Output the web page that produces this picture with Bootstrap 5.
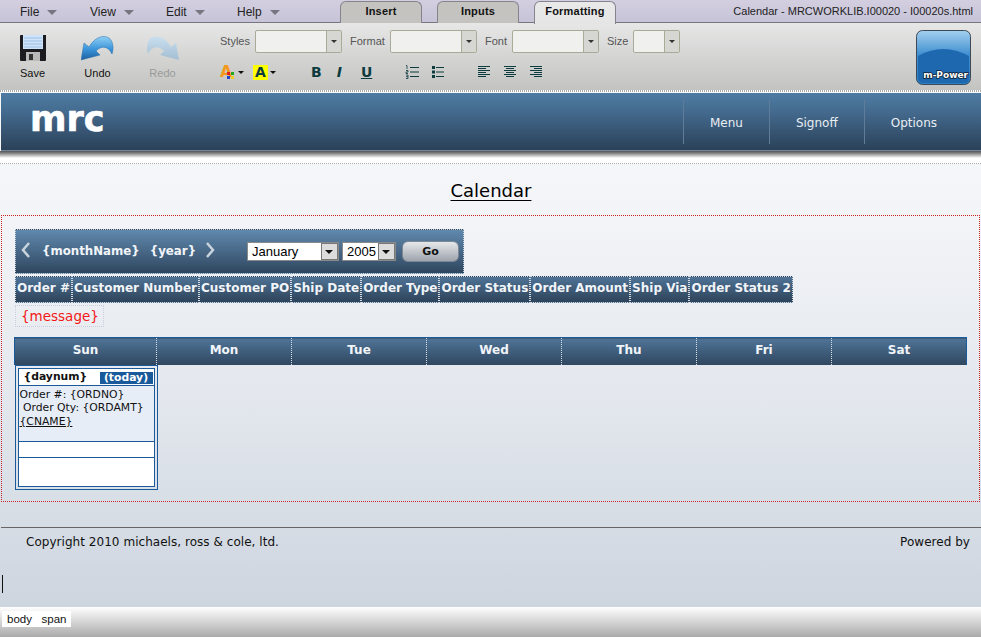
<!DOCTYPE html>
<html lang="en">
<head>
    <meta charset="UTF-8">
    <meta name="viewport" content="width=device-width, initial-scale=1.0">
    <title>Calendar - m-Power designer</title>
    <link href="https://cdn.jsdelivr.net/npm/bootstrap@5.3.0/dist/css/bootstrap.min.css" rel="stylesheet">
    <style>
        html, body { height: 100%; overflow: hidden; }
        body {
            background: #fff;
            color: #111;
            font-family: "Liberation Sans", Arial, sans-serif;
            font-size: 12px;
        }
        .app-shell { height: 637px; }

        /* top menu + tabs */
        .menu-strip {
            height: 23px;
            background: linear-gradient(#d3cfe0, #c8c4d8);
            border-bottom: 1px solid #77757f;
        }
        .menu-item { position: absolute; top: 3px; font-size: 12px; color: #222; }
        .menu-file { left: 20px; }
        .menu-view { left: 90px; }
        .menu-edit { left: 166px; }
        .menu-help { left: 237px; }
        .menu-caret {
            display: inline-block;
            margin-left: 8px;
            border-left: 5px solid transparent;
            border-right: 5px solid transparent;
            border-top: 5px solid #77757f;
            vertical-align: 1px;
        }
        .tab-link {
            width: 82px;
            height: 22px;
            border: 1px solid #85838c;
            border-bottom: 0;
            border-radius: 6px 6px 0 0;
            background: #c5c3c0;
            font-size: 11px;
            font-weight: bold;
            line-height: 19px;
            text-align: center;
            letter-spacing: .2px;
        }
        .tab-link.is-on { background: linear-gradient(#e9e9ea, #e4e5e4); height: 23px; margin-bottom: -1px; }
        .tab-row { padding-left: 340px; gap: 15px; padding-top: 1px; }
        .doc-title { font-size: 11px; padding-right: 8px; padding-top: 3px; color: #222; }

        /* toolbar */
        .tool-strip {
            height: 67px;
            background: linear-gradient(#e6e7e6, #c3c4c1);
        }
        .big-tool { width: 65px; text-align: center; font-size: 11px; padding-top: 11px; color: #111; }
        .big-tool svg { display: block; margin: 0 auto 3px; height: 28px; }
        .big-tool.is-off { color: #999; }
        .tool-rows { padding-left: 25px; }
        .combo-row { height: 23px; margin-top: 7px; color: #555; }
        .combo-label { font-size: 11px; flex: none; }
        .label-styles { width: 35px; }
        .label-format { width: 40px; }
        .label-font { width: 27px; }
        .label-size { width: 26px; }
        .combo-box {
            display: flex;
            height: 23px;
            margin-right: 8px;
            border: 1px solid #a9aa97;
            border-radius: 2px;
            background: #f0f1ef;
        }
        .combo-box span { flex: 1; }
        .combo-box b {
            width: 15px;
            border-left: 1px solid #a9aa97;
            background: #d6d7d3;
            position: relative;
        }
        .combo-box b::after {
            content: "";
            position: absolute;
            left: 4px;
            top: 9px;
            border-left: 3px solid transparent;
            border-right: 3px solid transparent;
            border-top: 3px solid #333;
        }
        .combo-87 { width: 87px; }
        .combo-47 { width: 47px; margin-right: 0; }
        .format-row { height: 18px; margin-top: 10px; color: #0d3b3f; }
        .fmt-glyph { font-family: "DejaVu Sans", sans-serif; font-weight: bold; font-size: 14px; line-height: 18px; }
        .mini-caret {
            display: inline-block;
            border-left: 3px solid transparent;
            border-right: 3px solid transparent;
            border-top: 3px solid #111;
            margin-left: 2px;
            vertical-align: 3px;
        }
        .swatch-a { color: #f39a1d; width: 16px; font-size: 16px; }
        .swatch-dots { margin: 6px 0 0 -9px; }
        .caret-a { margin-left: 4px; }
        .swatch-hi { background: #ffff00; color: #0d3b3f; width: 15px; height: 15px; line-height: 15px; text-align: center; display: inline-block; margin-left: 9px; }
        .glyph-b { margin-left: 35px; }
        .glyph-i { margin-left: 15px; font-style: italic; }
        .glyph-u { margin-left: 19px; text-decoration: underline; }
        .icon-ol { margin-left: 33px; }
        .icon-ul { margin-left: 13px; }
        .icon-first-align { margin-left: 34px; }
        .icon-align { margin-left: 14px; }
        .logo-slot { padding: 7px 10px 0 0; }

        .dot-strip {
            height: 2px;
            background: repeating-linear-gradient(90deg, #aaa 0 1px, #fff 1px 2px);
        }

        /* page preview */
        .page-area {
            flex: 1;
            min-height: 0;
            font-family: "DejaVu Sans", Verdana, sans-serif;
            background: linear-gradient(#f7f8fa 0, #f2f4f7 130px, #e4e8ee 300px, #cdd5df 100%);
        }
        .site-head {
            height: 58px;
            margin: 1px 0 0 1px;
            background: linear-gradient(#4f7ba3 0, #466e93 15px, #2b4159 100%);
            border-bottom: 1px solid #71869c;
        }
        .site-logo {
            font-weight: bold;
            font-size: 35px;
            line-height: 36px;
            color: #fff;
            padding: 8px 0 0 29px;
            -webkit-text-stroke: .6px #fff;
        }
        .site-link {
            height: 44px;
            margin-top: 7px;
            padding: 0 26px;
            line-height: 46px;
            color: #e9eef3;
            font-size: 12px;
            border-left: 1px solid #5f7c98;
        }
        .site-nav { padding-right: 18px; }
        .head-shadow { height: 7px; background: linear-gradient(#555, #777 25%, #fff); }
        .head-gap { height: 6px; background: #fff; border-bottom: 1px dotted #aaa; }
        .title-band {
            height: 51px;
            text-align: center;
            font-size: 18px;
            line-height: 54px;
            color: #000;
            padding-left: 1px;
        }
        .title-band u { text-underline-offset: 3px; }
        .design-box {
            height: 287px;
            border: 1px dotted #c22;
            margin: 0 1px 0 1px;
            padding: 13px 12px 0 12px;
        }
        .month-bar {
            width: 449px;
            height: 45px;
            margin-left: 1px;
            background: linear-gradient(#6089ae, #2f465f);
            border: 1px dotted #c9d0d8;
            color: #f1f5f9;
            font-weight: bold;
            font-size: 11.8px;
        }
        .month-arrow { width: 12px; flex: none; margin-bottom: 4px; }
        .arrow-prev { margin-left: 4px; }
        .arrow-next { margin-left: 8px; }
        .month-name { margin-left: 10px; }
        .month-year { margin-left: 10px; }
        .old-select {
            display: flex;
            align-items: center;
            height: 19px;
            background: #fff;
            border: 1px solid #8a8a8a;
            font-weight: normal;
            font-size: 13px;
            color: #000;
            font-family: "Liberation Sans", Arial, sans-serif;
            padding-left: 4px;
        }
        .old-select span { flex: 1; }
        .old-select b {
            width: 17px;
            height: 17px;
            background: #dcdcdc;
            border: 1px solid #777;
            position: relative;
        }
        .old-select b::after {
            content: "";
            position: absolute;
            left: 3px;
            top: 6px;
            border-left: 4px solid transparent;
            border-right: 4px solid transparent;
            border-top: 4px solid #111;
        }
        .select-month { width: 92px; margin-left: 31px; }
        .select-year { width: 54px; margin-left: 3px; }
        .go-btn {
            width: 57px;
            height: 21px;
            margin-left: 6px;
            border: 1px solid #7e8794;
            border-radius: 6px;
            background: linear-gradient(#e6e8ea, #9ea4ad);
            color: #111;
            font-size: 11px;
            font-weight: bold;
            line-height: 19px;
            text-align: center;
        }
        .field-row { margin: 2px 0 0 1px; }
        .field-cell {
            height: 27px;
            padding: 0 1px;
            line-height: 23px;
            background: linear-gradient(#4f7396, #2e4359);
            border: 1px dotted #d5dbe2;
            color: #f1f5f9;
            font-weight: bold;
            font-size: 12px;
            white-space: nowrap;
        }
        .msg-box {
            display: inline-block;
            margin: 2px 0 0 1px;
            padding: 0 4px 0 5px;
            height: 22px;
            line-height: 21px;
            border: 1px dotted #ccd;
            color: #f41818;
            font-size: 13.5px;
        }
        .cal-grid { width: 953px; margin-top: 10px; table-layout: fixed; border-collapse: collapse; }
        .cal-grid th {
            height: 27px;
            background: linear-gradient(#4f7498, #2f465e);
            border-top: 1px solid #1a5a9a;
            border-left: 1px dotted #d9e0e8;
            color: #f1f5f9;
            font-size: 12px;
            text-align: center;
            padding: 0 0 2px;
        }
        .cal-grid th:first-child { border-left: 1px solid #1a5a9a; width: 142px; }
        .cal-grid th:last-child { border-right: 1px solid #1a5a9a; }
        .cal-grid td { padding: 0; }
        .day-outer {
            width: 143px;
            height: 125px;
            padding: 2px;
            border: 1px solid #1a5a9a;
        }
        .day-inner { height: 100%; border: 1px solid #1a5a9a; background: #fff; color: #111; font-size: 10.8px; }
        .day-top { height: 17px; border-bottom: 1px solid #1a5a9a; font-weight: bold; padding: 0 1px 0 5px; line-height: 16px; }
        .today-chip { width: 53px; height: 12px; margin-top: 3px; background: #1a5a9a; color: #fff; line-height: 12px; text-align: center; }
        .day-body { height: 56px; background: #e6edf7; padding: 2px 1px; line-height: 13.5px; border-bottom: 1px solid #1a5a9a; white-space: nowrap; }
        .day-body a { color: #111; }
        .day-mid { height: 16px; border-bottom: 1px solid #1a5a9a; }
        .foot-line { margin-top: 25px; border-top: 1px solid #666; margin-left: 1px; padding: 5px 11px 0 25px; color: #111; font-size: 12px; letter-spacing: .04px; }
        .caret-line { position: absolute; left: 2px; top: 575px; width: 1px; height: 18px; background: #111; }
        .status-strip { height: 30px; background: linear-gradient(#fff, #aaa); padding: 4px 0 0 2px; }
        .path-chip { background: #fff; height: 16px; padding: 0 5px; font-size: 11.5px; line-height: 16px; }
    </style>
</head>
<body>
<div class="app-shell d-flex flex-column position-relative">

    <div class="menu-strip d-flex justify-content-between position-relative">
        <span class="menu-item menu-file">File<i class="menu-caret"></i></span>
        <span class="menu-item menu-view">View<i class="menu-caret"></i></span>
        <span class="menu-item menu-edit">Edit<i class="menu-caret"></i></span>
        <span class="menu-item menu-help">Help<i class="menu-caret"></i></span>
        <div class="tab-row d-flex">
            <div class="tab-link">Insert</div>
            <div class="tab-link">Inputs</div>
            <div class="tab-link is-on">Formatting</div>
        </div>
        <div class="doc-title">Calendar - MRCWORKLIB.I00020 - I00020s.html</div>
    </div>

    <div class="tool-strip d-flex">
        <div class="big-tool">
            <svg width="28" height="28" viewBox="0 0 28 28">
                <path d="M1 2 Q1 1 2 1 H27 V26 Q27 27 26 27 H2 Q1 27 1 26Z" fill="#1c1c20"/>
                <rect x="4" y="1" width="20" height="14" fill="#cfe4fa"/>
                <path d="M5 4h18M5 7h18M5 10h18M5 13h18" stroke="#9dbfe6" stroke-width="1"/>
                <rect x="7" y="18" width="14" height="9" fill="#b9b9b9"/>
                <rect x="10" y="20" width="4" height="6" fill="#333"/>
            </svg>
            Save
        </div>
        <div class="big-tool">
            <svg width="33" height="28" viewBox="0 0 33 28">
                <defs><linearGradient id="blueArrow" x1="0" y1="0" x2="0" y2="1"><stop offset="0" stop-color="#8fd0f5"/><stop offset=".55" stop-color="#3a93da"/><stop offset="1" stop-color="#1d5f9f"/></linearGradient></defs>
                <path d="M0 26 L3 9 L8 13 C13 4 22 0 28 4 C32 7 33 14 31 20 C28 14 24 12 19 14 C17 15 16 16 15 17 L19 21 Z" fill="url(#blueArrow)" stroke="#2a6ea8" stroke-width=".5"/>
            </svg>
            Undo
        </div>
        <div class="big-tool is-off">
            <svg width="33" height="28" viewBox="0 0 33 28">
                <defs><linearGradient id="paleArrow" x1="0" y1="0" x2="0" y2="1"><stop offset="0" stop-color="#c9dfee"/><stop offset="1" stop-color="#a3bdd2"/></linearGradient></defs>
                <path d="M33 26 L30 9 L25 13 C20 4 11 0 5 4 C1 7 0 14 2 20 C5 14 9 12 14 14 C16 15 17 16 18 17 L14 21 Z" fill="url(#paleArrow)"/>
            </svg>
            Redo
        </div>
        <div class="tool-rows">
            <div class="combo-row d-flex align-items-center">
                <span class="combo-label label-styles">Styles</span>
                <div class="combo-box combo-87"><span></span><b></b></div>
                <span class="combo-label label-format">Format</span>
                <div class="combo-box combo-87"><span></span><b></b></div>
                <span class="combo-label label-font">Font</span>
                <div class="combo-box combo-87"><span></span><b></b></div>
                <span class="combo-label label-size">Size</span>
                <div class="combo-box combo-47"><span></span><b></b></div>
            </div>
            <div class="format-row d-flex align-items-center">
                <span class="fmt-glyph swatch-a">A</span>
                <svg class="swatch-dots" width="7" height="7" viewBox="0 0 7 7"><rect width="3" height="3" fill="#d22"/><rect width="3" height="3" x="4" fill="#2a2"/><rect width="3" height="3" y="4" fill="#24c"/><rect width="3" height="3" x="4" y="4" fill="#ec2"/></svg>
                <i class="mini-caret caret-a"></i>
                <span class="fmt-glyph swatch-hi">A</span>
                <i class="mini-caret"></i>
                <span class="fmt-glyph glyph-b">B</span>
                <span class="fmt-glyph glyph-i">I</span>
                <span class="fmt-glyph glyph-u">U</span>
                <svg class="icon-ol" width="14" height="14" viewBox="0 0 14 14">
                    <path d="M5 2.500h9M5 7h9M5 11.500h9" stroke="#0d3b3f" stroke-width="1"/>
                    <path d="M1 0.500h1v3.500M1 5.500h2v1.500h-2v1.500h2M1 10h2v3.500h-2M1 11.700h2" fill="none" stroke="#0d3b3f" stroke-width=".8"/>
                </svg>
                <svg class="icon-ul" width="12" height="14" viewBox="0 0 12 14">
                    <rect y="1" width="3" height="3" fill="#0d3b3f"/><rect y="5.500" width="3" height="3" fill="#0d3b3f"/><rect y="10" width="3" height="3" fill="#0d3b3f"/>
                    <path d="M4 2.500h8M4 7h8M4 11.500h8" stroke="#0d3b3f" stroke-width="1"/>
                </svg>
                <svg class="icon-first-align" width="12" height="12" viewBox="0 0 12 12"><path d="M0 .5h12M0 2.500h8M0 4.500h12M0 6.500h8M0 8.500h12M0 10.500h8" stroke="#0d3b3f"/></svg>
                <svg class="icon-align" width="12" height="12" viewBox="0 0 12 12"><path d="M0 .5h12M2 2.500h8M0 4.500h12M2 6.500h8M0 8.500h12M2 10.500h8" stroke="#0d3b3f"/></svg>
                <svg class="icon-align" width="12" height="12" viewBox="0 0 12 12"><path d="M0 .5h12M4 2.500h8M0 4.500h12M4 6.500h8M0 8.500h12M4 10.500h8" stroke="#0d3b3f"/></svg>
            </div>
        </div>
        <div class="logo-slot ms-auto">
            <svg width="55" height="55" viewBox="0 0 55 55">
                <defs><linearGradient id="tile" x1="0" y1="0" x2="0" y2="1"><stop offset="0" stop-color="#a4d0ef"/><stop offset=".45" stop-color="#3f8fd0"/><stop offset="1" stop-color="#2b7fc4"/></linearGradient></defs>
                <rect x=".5" y=".5" width="54" height="54" rx="6" fill="url(#tile)" stroke="#3c4a57"/>
                <path d="M2 26 Q27 12 53 26 V48 Q53 53 48 53 H7 Q2 53 2 48Z" fill="#1e68b0"/>
                <text x="52" y="48" text-anchor="end" font-size="9" font-weight="bold" font-family="'DejaVu Sans', sans-serif" fill="#fff" stroke="#123" stroke-width="1.500" paint-order="stroke">m-Power</text>
            </svg>
        </div>
    </div>
    <div class="dot-strip"></div>

    <div class="page-area d-flex flex-column">
        <div class="site-head d-flex justify-content-between">
            <div class="site-logo">mrc</div>
            <nav class="site-nav d-flex">
                <a class="site-link text-decoration-none" href="#">Menu</a>
                <a class="site-link text-decoration-none" href="#">Signoff</a>
                <a class="site-link text-decoration-none" href="#">Options</a>
            </nav>
        </div>
        <div class="head-shadow"></div>
        <div class="head-gap"></div>
        <div class="title-band"><u>Calendar</u></div>

        <div class="design-box">
            <div class="month-bar d-flex align-items-center">
                <svg class="month-arrow arrow-prev" width="12" height="16" viewBox="0 0 12 16"><path d="M9 1 L3 8 L9 15" fill="none" stroke="#c9d3dd" stroke-width="2.500"/></svg>
                <span class="month-name">{monthName}</span>
                <span class="month-year">{year}</span>
                <svg class="month-arrow arrow-next" width="12" height="16" viewBox="0 0 12 16"><path d="M3 1 L9 8 L3 15" fill="none" stroke="#c9d3dd" stroke-width="2.500"/></svg>
                <div class="old-select select-month"><span>January</span><b></b></div>
                <div class="old-select select-year"><span>2005</span><b></b></div>
                <div class="go-btn">Go</div>
            </div>
            <div class="field-row d-flex">
                <div class="field-cell">Order #</div>
                <div class="field-cell">Customer Number</div>
                <div class="field-cell">Customer PO</div>
                <div class="field-cell">Ship Date</div>
                <div class="field-cell">Order Type</div>
                <div class="field-cell">Order Status</div>
                <div class="field-cell">Order Amount</div>
                <div class="field-cell">Ship Via</div>
                <div class="field-cell">Order Status 2</div>
            </div>
            <div class="msg-box">{message}</div>
            <table class="cal-grid">
                <thead>
                    <tr><th>Sun</th><th>Mon</th><th>Tue</th><th>Wed</th><th>Thu</th><th>Fri</th><th>Sat</th></tr>
                </thead>
                <tbody>
                    <tr>
                        <td>
                            <div class="day-outer">
                                <div class="day-inner">
                                    <div class="day-top d-flex justify-content-between">
                                        <span>{daynum}</span>
                                        <span class="today-chip">(today)</span>
                                    </div>
                                    <div class="day-body">
                                        Order #: {ORDNO}<br>
                                        &nbsp;Order Qty: {ORDAMT}<br>
                                        <a href="#">{CNAME}</a>
                                    </div>
                                    <div class="day-mid"></div>
                                </div>
                            </div>
                        </td>
                        <td colspan="6"></td>
                    </tr>
                </tbody>
            </table>
        </div>

        <div class="foot-line d-flex justify-content-between">
            <span>Copyright 2010 michaels, ross &amp; cole, ltd.</span>
            <span>Powered by</span>
        </div>
    </div>

    <div class="caret-line"></div>
    <div class="status-strip d-flex">
        <span class="path-chip">body&nbsp;&nbsp; span</span>
    </div>
</div>
<script src="https://cdn.jsdelivr.net/npm/bootstrap@5.3.0/dist/js/bootstrap.bundle.min.js"></script>
</body>
</html>
